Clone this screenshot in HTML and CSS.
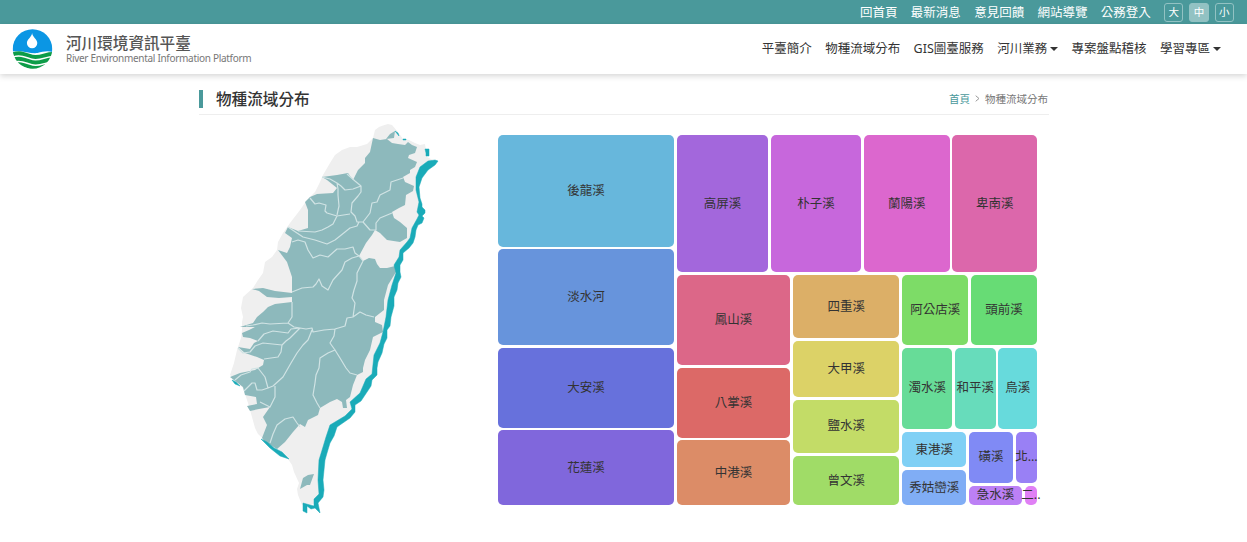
FILE: index.html
```html
<!DOCTYPE html>
<html lang="zh-Hant">
<head>
<meta charset="utf-8">
<title>河川環境資訊平臺</title>
<link rel="stylesheet" href="styles.css">
</head>
<body>
<div class="topbar">
  <a>回首頁</a><a>最新消息</a><a>意見回饋</a><a>網站導覽</a><a>公務登入</a>
  <div class="sizes"><span class="size">大</span><span class="size active">中</span><span class="size">小</span></div>
</div>
<header class="header">
  <div class="brand">
    <svg class="logo" viewBox="0 0 40 40">
      <defs><clipPath id="disc"><circle cx="20" cy="20" r="19.8"/></clipPath></defs>
      <g clip-path="url(#disc)">
        <rect width="40" height="40" fill="#fff"/>
        <path d="M0 0H40V23C34 21.500 30 23 25 24C18 25 10 21 0 22.500Z" fill="#0b96e4"/>
        <g fill="none" stroke="#0d9c48" stroke-width="3.900">
          <path d="M0 25.500C10 21.500 16 28 23 28S34 25 40 25"/>
          <path d="M0 31C10 27 16 33.500 23 33.500S34 30.500 40 30.500"/>
          <path d="M0 36.500C10 32.500 16 39 23 39S34 36 40 36"/>
        </g>
      </g>
      <path d="M19.600 4C20 8 24.800 10.500 24.800 14A5.200 5.200 0 0 1 14.400 14C14.400 10.500 19.200 8 19.600 4Z" fill="#fff"/>
    </svg>
    <div class="names"><div class="name">河川環境資訊平臺</div><div class="name-en">River Environmental Information Platform</div></div>
  </div>
  <nav class="nav">
    <a>平臺簡介</a><a>物種流域分布</a><a>GIS圖臺服務</a><a class="drop">河川業務</a><a>專案盤點稽核</a><a class="drop">學習專區</a>
  </nav>
</header>
<main class="page">
  <div class="heading">
    <h1>物種流域分布</h1>
    <div class="crumbs"><a>首頁</a><svg viewBox="0 0 5 7"><path d="M.7.7 4 3.500.7 6.300"/></svg><span>物種流域分布</span></div>
  </div>
  <div class="content">
    <svg class="map" viewBox="220 118 230 402">
      <path class="land" d="M373 138L375 130 379 127 383 125.500 388 124 392 125 398 132 403 139 409 140 415 143 420 145 425 144 427 157 433 160 428 163 420 171 418 180 420 200 421 215 413 230 410 241 401 254 397 272 393 290 386 320 383 337 376 356 374 374 363 391 353 404 353 411 337 425 330 441 323 460 321 480 321 493 315 503 309 506 302 505 298 495 297 489 299 483 294 472 292 465 288 459 270 445 258 434 255 428 252 417 248 403 243 388 230 375 234 363 237 350 241 338 242 330 242 322 243 317 241 308 243 297 253 288 258 280 263 273 265 262 272 257 277 250 278 242 283 233 290 223 300 210 307 200 315 192 320 182 323 175 330 163 335 155 342 150 350 147 357 147 367 144Z"/>
      <path class="basin" d="M373 138L380 140 387 139 392 143 398 144 405 145 408 142 412 145 417 147 415 153 409 155 408 158 417 162 415 167 410 170 410 173 403 177 405 182 414 186 413 191 406 195 405 205 399 208 392 212 394 218 400 222 407 228 407 238 400 242 387 240 380 233 375 230 372 235 366 243 359 256 363 261 369 258 375 259 377 264 380 268 387 268 395 266 396 272 388 285 384 300 384 310 375 317 375 322 382 325 383 332 373 337 370 350 365 360 363 368 363 372 357 375 353 385 350 397 346 400 347 408 343 408 342 402 337 399 330 402 320 408 318 415 308 420 305 427 300 424 293 432 285 442 277 449 265 442 262 438 267 425 263 417 270 407 259 409 250 411 247 406 257 404 256 397 245 395 243 387 230 377 240 373 255 370 263 365 264 360 257 357 245 353 238 347 250 349 254 343 258 341 250 338 243 337 242 333 249 330 255 327 240 327 253 323 257 317 263 312 268 307 275 304 292 302 292 297 279 298 267 297 259 291 252 289 263 288 275 291 292 293 292 277 287 262 278 250 287 253 290 247 292 238 285 233 288 227 298 231 308 228 308 210 305 202 310 197 317 194 333 193 337 188 327 180 322 177 337 175 348 173 353 180 358 170 365 163 365 158 370 152Z M386 139L390 134 395 131 394 138Z M303 478L308 475 314 474 310 485 307 485 300 489Z"/>
      <path class="divide" d="M322 177L330 179 337 183 341 186 345 190 353 189 361 186 361 192 358 196 352 203 351 212 355 216 357 222 363 222 370 213 372 203 377 202 380 195 390 190 391 182 403 178M347 174L355 181 361 186M337 183L338 189 338 195 339 206 337 215M310 198L315 204 319 203 326 205 325 211 327 213 337 216 350 214M288 227L303 237 315 240 327 244 335 240 350 228 357 226 359 222M298 231L315 232 322 230 328 227 333 224 337 216M363 222L370 230 376 230 376 223 380 218 392 213M292 242L298 240 305 242 308 250 313 258 320 255 328 257 337 249 345 249 353 247 355 253 359 256M292 292L302 288 313 287 316 284 319 279 322 286 328 290 333 280 342 270 345 262 352 258 359 256 363 261 357 273 357 281 354 290 352 298 355 303 354 310 353 317 347 318 345 326 335 329 334 336 330 343 335 350 328 353 320 358 319 368 316 375 315 383 313 395 317 403 320 408M353 317L360 312 366 315 374 317M335 350L340 358 346 368 350 373 357 375M292 302L292 317 288 323 294 327 300 328 306 329 312 328 313 332 324 330 335 329M246 326L253 325 262 323 270 324 288 323M258 341L264 334 273 331 288 333 291 329 300 328M238 348L243 353 250 352 255 346 263 343 282 345 286 341 290 338 300 328M282 345L281 352 278 357 264 359M312 330L308 340 303 345 297 353 291 363 283 377 273 386 268 388 262 390 257 390 255 383 252 383 244 391M235 380L241 375 250 372 252 369 258 368 265 377 268 388M275 386L275 397 270 407 260 402M270 443L273 434 277 425 285 419 293 417 297 423 300 427"/>
      <path class="coast" d="M438 161L435 165 428 170 425 174 422 178 419 187 420 198 422 204 422 207 425 210 425 213 422 216 424 218 422 223 418 225 416 230 415 237 413 243 409 248 403 253 403 260 400 265 400 272 401 277 398 283 397 290 394 297 394 306 391 317 390 326 387 330 387 338 384 344 382 353 378 362 377 368 377 375 372 380 371 386 367 392 361 401 355 405 355 412 350 418 337 427 334 436 330 443 327 453 325 460 324 470 323 480 324 490 323 497 318 503 320 513 315 508 311 509 307 506 307 513 303 511 303 503 310 505 314 506 314 499 319 494 318 480 319 460 323 447 326 437 330 425 345 416 352 409 350 402 360 393 366 379 372 374 374 355 380 343 383 332 386 317 388 300 392 285 396 273 394 265 399 257 400 250 407 242 410 238 412 228 417 219 419 215 417 212 419 202 416 190 416 177 420 167 428 161 435 160Z M395 131L398 133 399 136Z M403 139h3v1h-3Z M425 149H429V156H426V153Z M232 380L236 382 240 386 235 384Z M261 439L267 442 274 448 282 452 289 459 280 456 270 448Z"/>
    </svg>
    <div class="treemap">
      <div class="tile c1">後龍溪</div><div class="tile c2">淡水河</div><div class="tile c3">大安溪</div><div class="tile c4">花蓮溪</div>
      <div class="rest">
        <div class="tall"><div class="tile c5">高屏溪</div><div class="tile c6">朴子溪</div><div class="tile c7">蘭陽溪</div><div class="tile c8">卑南溪</div></div>
        <div class="lower">
          <div class="stack s1"><div class="tile c9">鳳山溪</div><div class="tile c10">八掌溪</div><div class="tile c11">中港溪</div></div>
          <div class="stack s2"><div class="tile c12">四重溪</div><div class="tile c13">大甲溪</div><div class="tile c14">鹽水溪</div><div class="tile c15">曾文溪</div></div>
          <div class="stack s3">
            <div class="row r1"><div class="tile c16">阿公店溪</div><div class="tile c17">頭前溪</div></div>
            <div class="row r2"><div class="tile c18">濁水溪</div><div class="tile c19">和平溪</div><div class="tile c20">烏溪</div></div>
            <div class="row r3">
              <div class="stack s4"><div class="tile c21">東港溪</div><div class="tile c22">秀姑巒溪</div></div>
              <div class="stack s5">
                <div class="row r4"><div class="tile c23">磺溪</div><div class="tile c24">北...</div></div>
                <div class="row r5"><div class="tile c25">急水溪</div><div class="tile c26">二..</div></div>
              </div>
            </div>
          </div>
        </div>
      </div>
    </div>
  </div>
</main>
</body>
</html>
```
FILE: styles.css
```css
* { box-sizing: border-box; }
body {
  margin: 0;
  height: 542px;
  overflow: hidden;
  background: #fff;
  color: #333;
  font-family: "Noto Sans", "Noto Sans CJK TC", sans-serif;
  font-size: 12.5px;
}
.topbar {
  height: 24px;
  padding: 1px 13px 0 0;
  background: #4a999b;
  color: #fff;
  display: flex;
  justify-content: flex-end;
  align-items: center;
  gap: 13.3px;
  line-height: 23px;
  white-space: nowrap;
}
.sizes { display: flex; gap: 6px; margin-top: -1px; }
.size {
  width: 19.300px;
  height: 19px;
  border: 1px solid #92c2c3;
  border-radius: 3px;
  font-size: 10.5px;
  line-height: 17px;
  text-align: center;
}
.size.active { background: #92c2c3; }
.header {
  height: 50px;
  padding: 0 26px 0 12px;
  background: #fff;
  box-shadow: 0 2px 6px rgba(0, 0, 0, .17);
  display: flex;
  align-items: center;
  justify-content: space-between;
  white-space: nowrap;
}
.brand { display: flex; gap: 13px; align-items: center; }
.logo { width: 41px; height: 40px; }
.names { padding-top: 1px; }
.name { font-size: 15.6px; line-height: 17px; font-weight: 500; color: #555; }
.name-en { font-size: 10px; line-height: 12px; letter-spacing: -.3px; color: #777; }
.nav { display: flex; gap: 13.4px; line-height: 20px; padding-bottom: 1px; }
.drop { display: flex; align-items: center; gap: 3px; }
.drop::after {
  content: "";
  border: 4px solid transparent;
  border-top-color: #333;
  border-bottom: 0;
}
.page { width: 850px; margin: 0 0 0 199px; padding-top: 10px; }
.heading {
  height: 31px;
  padding-right: 1px;
  border-bottom: 1px solid #eee;
  display: flex;
  justify-content: space-between;
}
h1 {
  margin: 6px 0 0;
  height: 18px;
  padding-left: 13px;
  border-left: 4px solid #4a999b;
  font-size: 15.6px;
  line-height: 18px;
  font-weight: 500;
}
.crumbs {
  height: 29px;
  display: flex;
  align-items: center;
  gap: 5px;
  font-size: 10.5px;
  color: #777;
}
.crumbs a { color: #4a999b; }
.crumbs svg { width: 5px; height: 7px; fill: none; stroke: #999; }
.content { display: flex; padding-left: 21px; }
.map { width: 230px; height: 402px; margin-top: 3px; flex: none; }
.land { fill: #efefef; }
.basin { fill: #8db9bc; }
.divide { fill: none; stroke: #d0e3e4; stroke-width: 1.200; stroke-linejoin: round; }
.coast { fill: #1aabb8; stroke: #1aabb8; stroke-width: .500; }
.treemap {
  width: 539px;
  height: 370.500px;
  margin: 20px 0 0 48px;
  display: grid;
  grid-template: 111.500px 96px 79.500px 75px / 176px 360.300px;
  gap: 2.800px;
}
.tile {
  min-width: 0;
  min-height: 0;
  border-radius: 5px;
  display: flex;
  align-items: center;
  justify-content: center;
  line-height: 18px;
  white-space: nowrap;
}
.rest {
  grid-area: 1 / 2 / 5 / 3;
  display: grid;
  grid-template-rows: 137.300px 230.300px;
  gap: 2.900px;
}
.treemap > .tile { grid-column: 1; }
.tall { display: grid; grid-template-columns: 91.300px 90.500px 86px 84.700px; gap: 2.600px; }
.lower { display: grid; grid-template-columns: 113.500px 106.500px 135px; gap: 2.700px; }
.stack, .row { display: grid; gap: 2.900px; }
.s1 { grid-template-rows: 89.500px 70px 65px; }
.s2 { grid-template-rows: 63.300px 55.700px 53px 49.600px; }
.s3 { grid-template-rows: 69.700px 81.300px 73.500px; }
.s4 { grid-template-rows: 35.500px 35.100px; }
.s5 { grid-template-rows: 50.800px 19.800px; }
.r1 { grid-template-columns: 66px 66px; }
.r2 { grid-template-columns: 50px 40.500px 38.700px; }
.r3 { grid-template-columns: 64.300px 67.800px; }
.r4 { grid-template-columns: 43.500px 21.400px; }
.r5 { grid-template-columns: 52.500px 12.400px; }
.r5 .tile { line-height: 16px; padding-bottom: 2px; }
.c1 { background: #67b7dc; }
.c2 { background: #6794dc; }
.c3 { background: #6771dc; }
.c4 { background: #8067dc; }
.c5 { background: #a367dc; }
.c6 { background: #c767dc; }
.c7 { background: #dc67ce; }
.c8 { background: #dc67ab; }
.c9 { background: #dc6788; }
.c10 { background: #dc6967; }
.c11 { background: #dc8c67; }
.c12 { background: #dcaf67; }
.c13 { background: #dcd267; }
.c14 { background: #c3dc67; }
.c15 { background: #a0dc67; }
.c16 { background: #7ddc67; }
.c17 { background: #67dc75; }
.c18 { background: #67dc98; }
.c19 { background: #67dcbb; }
.c20 { background: #67dadc; }
.c21 { background: #80d0f5; }
.c22 { background: #80adf5; }
.c23 { background: #808af5; }
.c24 { background: #9980f5; }
.c25 { background: #bc80f5; }
.c26 { background: #e080f5; }
```
